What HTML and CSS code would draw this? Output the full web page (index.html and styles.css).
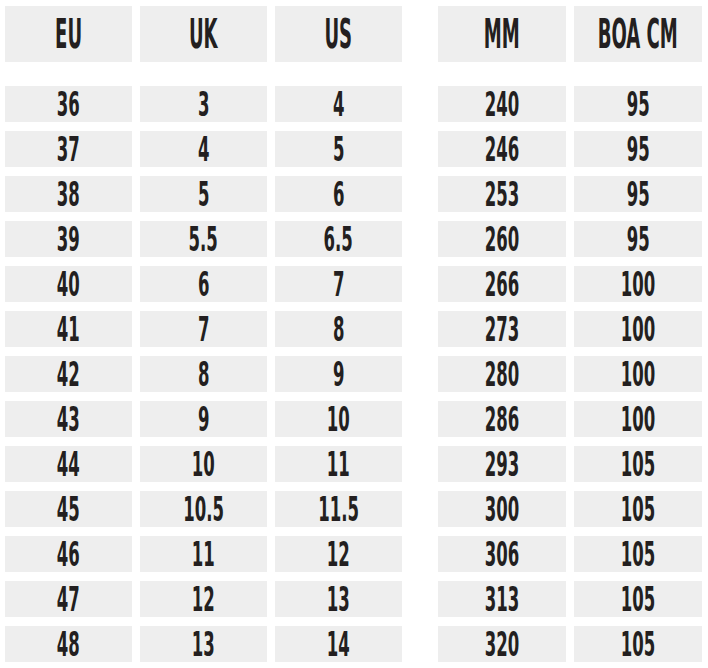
FILE: index.html
```html
<!DOCTYPE html>
<html>
<head>
<meta charset="utf-8">
<link rel="stylesheet" href="styles.css">
</head>
<body>
<div class="chart">
  <div class="grid left">
    <div class="cell head"><span>EU</span></div>
    <div class="cell head"><span>UK</span></div>
    <div class="cell head"><span>US</span></div>
    <div class="cell"><span>36</span></div><div class="cell"><span>3</span></div><div class="cell"><span>4</span></div>
    <div class="cell"><span>37</span></div><div class="cell"><span>4</span></div><div class="cell"><span>5</span></div>
    <div class="cell"><span>38</span></div><div class="cell"><span>5</span></div><div class="cell"><span>6</span></div>
    <div class="cell"><span>39</span></div><div class="cell"><span>5.5</span></div><div class="cell"><span>6.5</span></div>
    <div class="cell"><span>40</span></div><div class="cell"><span>6</span></div><div class="cell"><span>7</span></div>
    <div class="cell"><span>41</span></div><div class="cell"><span>7</span></div><div class="cell"><span>8</span></div>
    <div class="cell"><span>42</span></div><div class="cell"><span>8</span></div><div class="cell"><span>9</span></div>
    <div class="cell"><span>43</span></div><div class="cell"><span>9</span></div><div class="cell"><span>10</span></div>
    <div class="cell"><span>44</span></div><div class="cell"><span>10</span></div><div class="cell"><span>11</span></div>
    <div class="cell"><span>45</span></div><div class="cell"><span>10.5</span></div><div class="cell"><span>11.5</span></div>
    <div class="cell"><span>46</span></div><div class="cell"><span>11</span></div><div class="cell"><span>12</span></div>
    <div class="cell"><span>47</span></div><div class="cell"><span>12</span></div><div class="cell"><span>13</span></div>
    <div class="cell"><span>48</span></div><div class="cell"><span>13</span></div><div class="cell"><span>14</span></div>
  </div>
  <div class="grid right">
    <div class="cell head"><span>MM</span></div>
    <div class="cell head"><span>BOA CM</span></div>
    <div class="cell"><span>240</span></div><div class="cell"><span>95</span></div>
    <div class="cell"><span>246</span></div><div class="cell"><span>95</span></div>
    <div class="cell"><span>253</span></div><div class="cell"><span>95</span></div>
    <div class="cell"><span>260</span></div><div class="cell"><span>95</span></div>
    <div class="cell"><span>266</span></div><div class="cell"><span>100</span></div>
    <div class="cell"><span>273</span></div><div class="cell"><span>100</span></div>
    <div class="cell"><span>280</span></div><div class="cell"><span>100</span></div>
    <div class="cell"><span>286</span></div><div class="cell"><span>100</span></div>
    <div class="cell"><span>293</span></div><div class="cell"><span>105</span></div>
    <div class="cell"><span>300</span></div><div class="cell"><span>105</span></div>
    <div class="cell"><span>306</span></div><div class="cell"><span>105</span></div>
    <div class="cell"><span>313</span></div><div class="cell"><span>105</span></div>
    <div class="cell"><span>320</span></div><div class="cell"><span>105</span></div>
  </div>
</div>
</body>
</html>
```

FILE: styles.css
```css
html, body {
  margin: 0;
  padding: 0;
  background: #ffffff;
}
body {
  padding: 6px 0 0 5px;
  font-family: "DejaVu Sans Condensed", "Liberation Sans", sans-serif;
  font-weight: 700;
  color: #231f20;
}
.chart {
  display: flex;
  gap: 36px;
}
.grid {
  display: grid;
  column-gap: 8px;
  row-gap: 9px;
  grid-template-rows: 71px;
  grid-auto-rows: 36px;
}
.left { grid-template-columns: repeat(3, 127px); }
.right { grid-template-columns: repeat(2, 128px); }
.cell {
  background: #eeeeee;
  display: flex;
  align-items: center;
  justify-content: center;
  font-size: 34px;
  line-height: 36px;
}
.cell span {
  display: inline-block;
  transform: scaleX(0.54);
  white-space: nowrap;
}
.head {
  font-size: 41px;
  line-height: 56px;
  margin-bottom: 15px;
}
.head span {
  transform: scaleX(0.49);
}
```
